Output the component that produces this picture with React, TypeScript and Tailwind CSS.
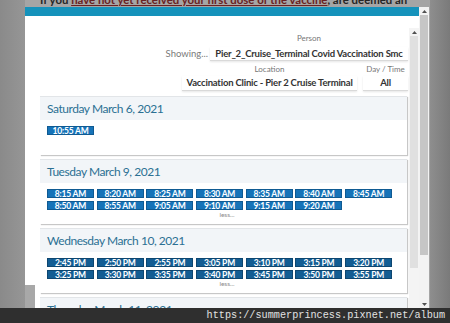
import React from "react";

const tuesday = [
  "8:15 AM", "8:20 AM", "8:25 AM", "8:30 AM", "8:35 AM", "8:40 AM", "8:45 AM",
  "8:50 AM", "8:55 AM", "9:05 AM", "9:10 AM", "9:15 AM", "9:20 AM",
];

const wednesday = [
  "2:45 PM", "2:50 PM", "2:55 PM", "3:05 PM", "3:10 PM", "3:15 PM", "3:20 PM",
  "3:25 PM", "3:30 PM", "3:35 PM", "3:40 PM", "3:45 PM", "3:50 PM", "3:55 PM",
];

function Arrow({ up }: { up?: boolean }) {
  return (
    <svg width="5" height="3" viewBox="0 0 5 3" className="block">
      <polygon points={up ? "0,3 5,3 2.5,0" : "0,0 5,0 2.5,3"} fill="#505050" />
    </svg>
  );
}

function DayCard({
  title,
  times,
  dark,
  less,
}: {
  title: string;
  times: string[];
  dark?: boolean;
  less?: boolean;
}) {
  return (
    <div className="bg-white border-t border-[#e2e5e8] shadow-[1px_1px_1px_rgba(0,0,0,0.22)]">
      <div className="h-[23px] bg-[#f2f5f8] pl-[7px] pt-[6px] text-[12px] leading-[12px] tracking-[-0.45px] text-[#2b7093]">
        {title}
      </div>
      <div className={`pl-[7px] pt-[6px] ${less ? "pb-[5px]" : "pb-[20px]"}`}>
        <div className="grid grid-cols-[repeat(7,47px)] gap-x-[2.7px] gap-y-[3px]">
          {times.map((t) => (
            <div
              key={t}
              className={`h-[9px] flex items-center justify-center text-[8.5px] leading-[8px] font-bold tracking-[-0.2px] text-white border ${
                dark ? "bg-[#135d93] border-[#0d4670]" : "bg-[#1673b8] border-[#0f5a92]"
              }`}
            >
              {t}
            </div>
          ))}
        </div>
        {less && (
          <div className="h-[8px] mt-[1px] text-center text-[6.5px] leading-[8px] text-[#8a8a8a]">less...</div>
        )}
      </div>
    </div>
  );
}

export default function App() {
  return (
    <div className="relative w-[450px] h-[323px] overflow-hidden font-['Lato',sans-serif]">
      {/* dimmed page behind the dialog */}
      <div className="flex h-full">
        <div className="w-[25px] bg-gradient-to-r from-[#8a8a8a] to-[#969696]" />
        <div className="w-[405px] bg-[#a5a5a5] relative">
          <div className="absolute left-[15px] top-[-6px] whitespace-nowrap text-[11.4px] leading-[12px] font-bold text-[#262626]">
            If you <span className="text-[#6a2222] underline">have not yet received your first dose of the vaccine</span>, are deemed an
          </div>
        </div>
        <div className="flex-1 bg-gradient-to-r from-[#8e8e8e] to-[#7a7a7a]" />
      </div>

      {/* dialog */}
      <div className="absolute left-[25px] top-[7px] w-[404px] h-[301px] flex bg-white">
        <div className="w-[394px] flex flex-col">
          <div className="h-[9px] bg-[#1592bb]" />
          <div className="flex-1 flex min-h-0">
            <div className="flex-1 pl-[13px] pr-[1px] overflow-hidden">
              {/* filters */}
              <div className="flex flex-col items-end pt-[18px] text-[#333]">
                <div className="w-[198px] text-center text-[8px] leading-[8px] text-[#777]">Person</div>
                <div className="mt-[5px] flex items-center">
                  <span className="mr-[2px] text-[9.5px] text-[#7a7a7a]">Showing...</span>
                  <div className="w-[198px] h-[14px] flex items-center justify-center border-b border-[#d9d9d9] shadow-[0_1px_2px_rgba(0,0,0,0.1)] text-[9.5px] font-bold tracking-[-0.2px] whitespace-nowrap overflow-hidden">
                    Pier_2_Cruise_Terminal Covid Vaccination Smc
                  </div>
                </div>
                <div className="mt-[4px] flex gap-[6px] text-[8px] leading-[8px] text-[#777]">
                  <div className="w-[175px] text-center">Location</div>
                  <div className="w-[45px] text-center">Day / Time</div>
                </div>
                <div className="mt-[3px] flex gap-[6px] text-[9.5px] font-bold tracking-[-0.2px]">
                  <div className="w-[175px] h-[15px] flex items-center justify-center border-b border-[#d9d9d9] shadow-[0_1px_2px_rgba(0,0,0,0.1)] whitespace-nowrap">
                    Vaccination Clinic - Pier 2 Cruise Terminal
                  </div>
                  <div className="w-[45px] h-[15px] flex items-center justify-center border-b border-[#d9d9d9] shadow-[0_1px_2px_rgba(0,0,0,0.1)]">
                    All
                  </div>
                </div>
              </div>

              {/* days */}
              <div className="mt-[5px] ml-[2px] mr-[1px] flex flex-col gap-[4px]">
                <DayCard title="Saturday March 6, 2021" times={["10:55 AM"]} />
                <DayCard title="Tuesday March 9, 2021" times={tuesday} less />
                <DayCard title="Wednesday March 10, 2021" times={wednesday} dark less />
                <DayCard title="Thursday March 11, 2021" times={[]} less />
              </div>
            </div>

            {/* inner scrollbar */}
            <div className="w-[10px] mt-[12px] bg-[#f4f4f4] flex flex-col items-center">
              <div className="h-[8px] flex items-center">
                <Arrow up />
              </div>
              <div className="w-[8px] h-[232px] bg-[#e0e0e0]" />
            </div>
          </div>
        </div>

        {/* outer scrollbar */}
        <div className="w-[10px] bg-[#f3f3f3] flex flex-col items-center">
          <div className="h-[8px] flex items-center">
            <Arrow up />
          </div>
          <div className="w-[8px] h-[240px] bg-[#c6c6c6]" />
          <div className="flex-1" />
          <div className="h-[8px] flex items-center">
            <Arrow />
          </div>
        </div>
      </div>

      <div className="absolute left-[25px] top-[285px] w-[10px] h-[23px] bg-[#a8a8a8]" />

      {/* watermark */}
      <div className="absolute left-0 right-0 bottom-0 h-[15px] bg-[#2f2f2f] flex items-center justify-end pr-[5px] font-['Liberation_Mono',monospace] text-[10.2px] text-[#e2e2e2]">
        https://summerprincess.pixnet.net/album
      </div>
    </div>
  );
}
